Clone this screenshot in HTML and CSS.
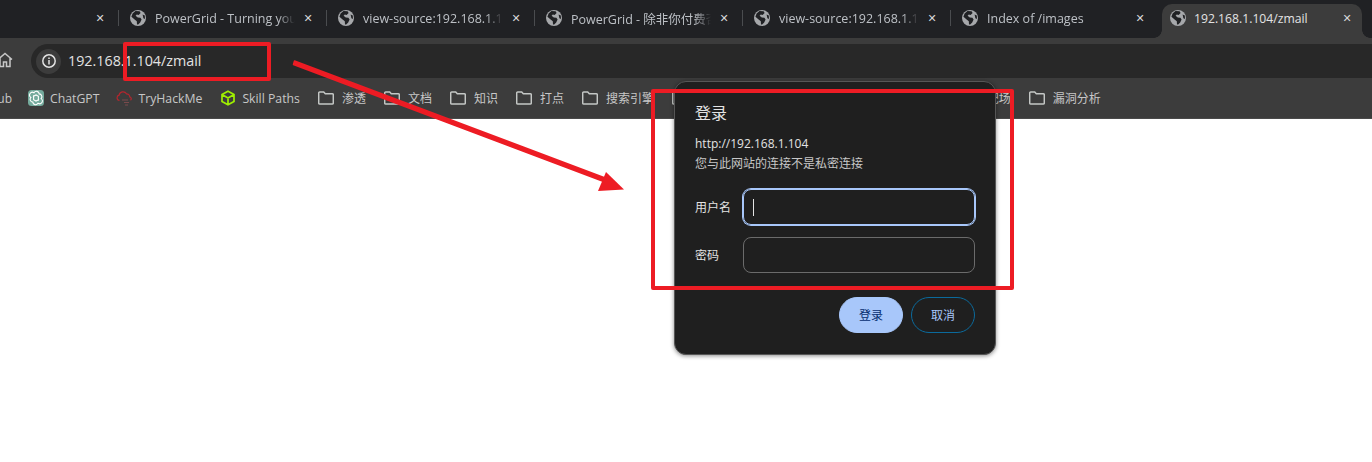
FILE: index.html
```html
<!DOCTYPE html>
<html lang="zh-CN">
<head>
    <meta charset="UTF-8">
    <title>192.168.1.104/zmail</title>
    <link rel="stylesheet" href="styles.css">
</head>
<body>
    <svg class="defs" width="0" height="0">
        <symbol id="globe" viewBox="0 0 16 16">
            <circle cx="8" cy="8" r="8" fill="#a6a8ab"/>
            <path d="M5.500 1 9.600 1.200 10.600 3 8.600 5 6.800 4.400 5.600 5.800 7.800 7.600 10.400 7.800 11.600 9.600 10.200 12.400 8.200 14.400 7 14.400 6.800 11.200 4.600 9.400 1.400 6.800 2.600 3.400Z" fill="#202124"/>
            <path d="M12.600 4.600 14.800 5.600 15 9 13.400 8.200Z" fill="#202124"/>
        </symbol>
        <symbol id="folder" viewBox="0 0 16 14">
            <path d="M1.700 1h4l1.600 1.800h7a1 1 0 0 1 1 1V12a1 1 0 0 1-1 1H1.700a1 1 0 0 1-1-1V2a1 1 0 0 1 1-1Z" fill="none" stroke="#c4c7c5" stroke-width="1.500"/>
        </symbol>
    </svg>

    <div class="tabstrip">
        <div class="tab first">
            <span class="close">✕</span>
        </div>
        <div class="tab">
            <svg class="favicon"><use href="#globe"/></svg>
            <span class="title">PowerGrid - Turning your ideas</span>
            <span class="close">✕</span>
        </div>
        <div class="tab">
            <svg class="favicon"><use href="#globe"/></svg>
            <span class="title">view-source:192.168.1.104</span>
            <span class="close">✕</span>
        </div>
        <div class="tab">
            <svg class="favicon"><use href="#globe"/></svg>
            <span class="title">PowerGrid - 除非你付费否则</span>
            <span class="close">✕</span>
        </div>
        <div class="tab">
            <svg class="favicon"><use href="#globe"/></svg>
            <span class="title">view-source:192.168.1.104</span>
            <span class="close">✕</span>
        </div>
        <div class="tab last">
            <svg class="favicon"><use href="#globe"/></svg>
            <span class="title">Index of /images</span>
            <span class="close">✕</span>
        </div>
        <div class="tab active">
            <svg class="favicon"><use href="#globe"/></svg>
            <span class="title">192.168.1.104/zmail</span>
            <span class="close">✕</span>
        </div>
    </div>

    <div class="toolbar">
        <svg class="home" width="16" height="16" viewBox="0 0 16 16">
            <path d="M1 7.500 8 1.500l7 6M3 6v8.500h3.500V10h3v4.500H13V6" fill="none" stroke="#c7c7c7" stroke-width="1.500"/>
        </svg>
        <div class="omnibox">
            <span class="site-info">
                <svg width="16" height="16" viewBox="0 0 16 16">
                    <circle cx="8" cy="8" r="6.200" fill="none" stroke="#e3e3e3" stroke-width="1.500"/>
                    <path d="M8 7v4.500M8 4.500v1.400" stroke="#e3e3e3" stroke-width="1.500"/>
                </svg>
            </span>
            <span class="url">192.168.1.104/zmail</span>
        </div>
    </div>

    <div class="bookmarks">
        <span class="mark cut">GitHub</span>
        <span class="mark site tight">
            <svg class="mark-icon" viewBox="0 0 16 16">
                <rect width="16" height="16" rx="3.500" fill="#74aa9c"/>
                <path d="M6 2.700a2.800 2.800 0 0 1 5.200 1.200 2.800 2.800 0 0 1 1.900 4.700 2.800 2.800 0 0 1-3.100 4.700 2.800 2.800 0 0 1-5.200-1.200 2.800 2.800 0 0 1-1.900-4.700A2.800 2.800 0 0 1 6 2.700ZM5.600 5.200v4.500l2.400 1.400 3-1.700M10.400 10.800V6.300L8 4.900 5 6.600" fill="none" stroke="#fff" stroke-width="1.100"/>
            </svg>
            ChatGPT
        </span>
        <span class="mark site">
            <svg class="mark-icon" viewBox="0 0 16 16">
                <path d="M3.500 10.500a2.700 2.700 0 0 1-.4-5.300 4 4 0 0 1 7.400-1.400 3 3 0 0 1 3.200 3 2 2 0 0 1 .8 3.500" fill="none" stroke="#b3262e" stroke-width="1.200"/>
                <path d="M6 10h6M8 12.500h5M9 15h3" stroke="#7a4a4c" stroke-width="1"/>
            </svg>
            TryHackMe
        </span>
        <span class="mark site">
            <svg class="mark-icon" viewBox="0 0 16 16">
                <path d="M8 1.200 14 4.600v6.800L8 14.800 2 11.400V4.600ZM2.400 4.800 8 8l5.600-3.200M8 8v6.500" fill="none" stroke="#9fef00" stroke-width="1.700"/>
            </svg>
            Skill Paths
        </span>
        <span class="mark"><svg class="folder"><use href="#folder"/></svg>渗透</span>
        <span class="mark"><svg class="folder"><use href="#folder"/></svg>文档</span>
        <span class="mark"><svg class="folder"><use href="#folder"/></svg>知识</span>
        <span class="mark"><svg class="folder"><use href="#folder"/></svg>打点</span>
        <span class="mark"><svg class="folder"><use href="#folder"/></svg>搜索引擎</span>
        <span class="mark"><svg class="folder"><use href="#folder"/></svg>工具</span>
        <span class="mark"><svg class="folder"><use href="#folder"/></svg>字典</span>
        <span class="mark"><svg class="folder"><use href="#folder"/></svg>CTF: 平台</span>
        <span class="mark"><svg class="folder"><use href="#folder"/></svg>靶机</span>
        <span class="mark"><svg class="folder"><use href="#folder"/></svg>靶场</span>
        <span class="mark"><svg class="folder"><use href="#folder"/></svg>漏洞分析</span>
    </div>

    <form class="dialog">
        <h1 class="dialog-title">登录</h1>
        <p class="origin">http://192.168.1.104</p>
        <p class="notice">您与此网站的连接不是私密连接</p>
        <div class="field">
            <label for="username">用户名</label>
            <div id="username" class="input focused"><i class="caret"></i></div>
        </div>
        <div class="field">
            <label for="password">密码</label>
            <div id="password" class="input"></div>
        </div>
        <div class="actions">
            <button type="button" class="btn primary">登录</button>
            <button type="button" class="btn">取消</button>
        </div>
    </form>

    <div class="box box-url"></div>
    <div class="box box-form"></div>
    <svg class="arrow" width="1372" height="462" viewBox="0 0 1372 462">
        <path d="M294.500 61 293.500 64.500 609 183.500 610.500 180Z" fill="#ed1c24" stroke="#ed1c24" stroke-width="1.500" stroke-linejoin="round"/>
        <path d="M606 172 624 189.500 598 191Z" fill="#ed1c24"/>
    </svg>
</body>
</html>
```

FILE: styles.css
```css
* {
    box-sizing: border-box;
}
body {
    margin: 0;
    height: 462px;
    overflow: hidden;
    background: #fff;
    font-family: "Open Sans", "Noto Sans CJK SC", sans-serif;
    color: #c7c7c7;
}
.defs {
    position: absolute;
}

/* tabs */
.tabstrip {
    display: flex;
    height: 38px;
    margin-left: -89px;
    background: #202124;
    overflow: hidden;
}
.tab {
    flex: 0 0 208px;
    min-width: 0;
    display: flex;
    align-items: center;
    padding: 0 0 2px 11px;
    height: 38px;
    font-size: 12.5px;
    position: relative;
}
.tab::after {
    content: "";
    position: absolute;
    right: 0;
    top: 10px;
    width: 1px;
    height: 16px;
    background: #4a4c4f;
}
.tab.last::after {
    display: none;
}
.tab.first {
    justify-content: flex-end;
}
.favicon {
    flex: none;
    width: 16px;
    height: 16px;
    margin-right: 9px;
}
.title {
    flex: 1;
    min-width: 0;
    white-space: nowrap;
    overflow: hidden;
    color: #bdc1c6;
    -webkit-mask-image: linear-gradient(to right, #000 88%, transparent 100%);
    mask-image: linear-gradient(to right, #000 88%, transparent 100%);
}
.close {
    flex: none;
    width: 26px;
    margin-right: 6px;
    font-size: 11px;
    text-align: center;
    color: #d5d6d7;
    font-family: "DejaVu Sans", sans-serif;
}
.tab.active {
    flex: 0 0 200px;
    height: 34px;
    margin: 4px 0 0 3px;
    padding: 0 0 6px 8px;
    font-size: 12.200px;
    background: #3c3c3c;
    border-radius: 10px 10px 0 0;
}
.tab.active .favicon {
    margin-right: 8px;
}
.tab.active .title {
    color: #e3e3e3;
    -webkit-mask-image: none;
    mask-image: none;
}
.tab.active .close {
    margin-right: 2px;
}
.tab.active::before,
.tab.active::after {
    content: "";
    position: absolute;
    top: auto;
    bottom: 0;
    width: 8px;
    height: 8px;
}
.tab.active::before {
    left: -8px;
    background: radial-gradient(circle at 0 0, transparent 7.500px, #3c3c3c 8px);
}
.tab.active::after {
    right: -8px;
    background: radial-gradient(circle at 100% 0, transparent 7.500px, #3c3c3c 8px);
}

/* toolbar */
.toolbar {
    display: flex;
    align-items: center;
    height: 40px;
    padding: 6px 0 0 31px;
    background: #3c3c3c;
    position: relative;
}
.home {
    position: absolute;
    left: -3px;
    top: 14px;
}
.omnibox {
    flex: 1;
    height: 34px;
    display: flex;
    align-items: center;
    padding-left: 5px;
    background: #282828;
    border-radius: 17px 0 0 17px;
}
.site-info {
    display: flex;
    align-items: center;
    justify-content: center;
    width: 25px;
    height: 25px;
    margin-right: 7px;
    border-radius: 50%;
    background: #3c3c3c;
}
.url {
    font-size: 14.300px;
    line-height: 20px;
    padding-bottom: 1px;
    color: #e3e3e3;
}

/* bookmarks */
.bookmarks {
    display: flex;
    align-items: center;
    gap: 18px;
    height: 41px;
    background: #3c3c3c;
    font-size: 12px;
    white-space: nowrap;
    overflow: hidden;
    border-bottom: 1px solid #4a4a4a;
}
.mark {
    display: flex;
    align-items: center;
    flex: none;
    color: #c7c7c7;
}
.mark.site {
    font-size: 12.250px;
}
.mark.cut {
    width: 12px;
    margin-right: -2px;
    justify-content: flex-end;
}
.mark.tight {
    margin-right: -1px;
}
.mark-icon {
    width: 16px;
    height: 16px;
    margin-right: 6px;
}
.folder {
    width: 16px;
    height: 14px;
    margin-right: 8px;
}

/* dialog */
.dialog {
    position: absolute;
    left: 674px;
    top: 81px;
    width: 322px;
    height: 274px;
    padding: 20px 20px 0;
    background: #1f1f1f;
    border: 1px solid #565656;
    border-radius: 12px;
    box-shadow: 0 1px 4px rgba(0, 0, 0, .45);
    color: #e3e3e3;
}
.dialog-title {
    margin: 0 0 10px;
    font-size: 16px;
    font-weight: 400;
    line-height: 22px;
}
.origin {
    margin: 0;
    font-size: 12px;
    line-height: 20px;
}
.notice {
    margin: 0 0 15px;
    font-size: 12px;
    line-height: 20px;
    color: #c7c7c7;
}
.field {
    display: flex;
    align-items: center;
    margin-bottom: 12px;
}
.field label {
    flex: 0 0 48px;
    font-size: 12px;
}
.input {
    width: 232px;
    height: 36px;
    border: 1px solid #6b6b6b;
    border-radius: 8px;
    display: flex;
    align-items: center;
    padding-left: 9px;
}
.input.focused {
    border-color: #a8c7fa;
    box-shadow: 0 0 0 1px #a8c7fa;
}
.caret {
    width: 1px;
    height: 17px;
    background: #e3e3e3;
}
.actions {
    display: flex;
    justify-content: flex-end;
    gap: 8px;
    margin-top: 24px;
}
.btn {
    width: 64px;
    height: 36px;
    border: 1px solid #0b6a9c;
    border-radius: 18px;
    background: transparent;
    color: #a8c7fa;
    font-family: inherit;
    font-size: 12px;
}
.btn.primary {
    background: #a8c7fa;
    border-color: #a8c7fa;
    color: #062e6f;
}

/* annotations drawn over the screenshot */
.box {
    position: absolute;
    border: 4px solid #ed1c24;
    border-radius: 2px;
}
.box-url {
    left: 123px;
    top: 42px;
    width: 148px;
    height: 39px;
}
.box-form {
    left: 651px;
    top: 89px;
    width: 363px;
    height: 201px;
}
.arrow {
    position: absolute;
    left: 0;
    top: 0;
    pointer-events: none;
}
```
